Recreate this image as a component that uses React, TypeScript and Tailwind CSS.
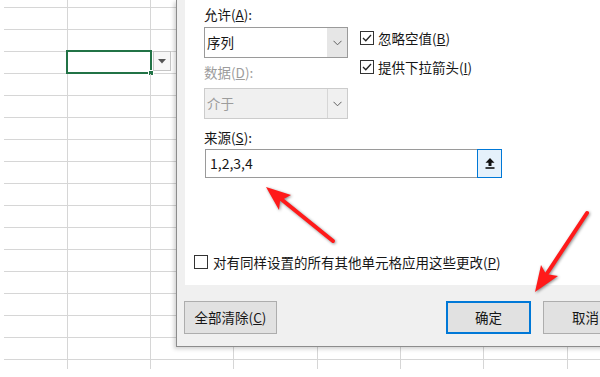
import React from "react";

const rowHeights = [8, ...Array(16).fill(22), 9];
const colWidths = [64, 83, 83, 84, 83, 83, 84, 83];

function Checkbox({ checked }: { checked?: boolean }) {
  return (
    <span className="flex h-[14px] w-[14px] shrink-0 items-center justify-center border border-[#333] bg-white">
      {checked && (
        <svg width="10" height="8" viewBox="0 0 10 8">
          <path d="M1 4 L3.8 6.8 L9 1" fill="none" stroke="#222" strokeWidth="1.3" />
        </svg>
      )}
    </span>
  );
}

function Chevron({ color }: { color: string }) {
  return (
    <svg width="9" height="6" viewBox="0 0 9 6">
      <path d="M0.5 0.8 L4.5 4.8 L8.5 0.8" fill="none" stroke={color} strokeWidth="1" />
    </svg>
  );
}

function SheetGrid() {
  return (
    <div className="flex h-[368px] flex-col pl-[4px]">
      {rowHeights.map((h, r) => (
        <div
          key={r}
          className={`flex shrink-0 ${r < rowHeights.length - 1 ? "border-b border-[#d6d6d6]" : ""}`}
          style={{ height: h }}
        >
          {colWidths.map((w, c) => (
            <div key={c} className="relative shrink-0 border-r border-[#d6d6d6]" style={{ width: w }}>
              {r === 3 && c === 1 && (
                <>
                  <div className="absolute -left-[2px] -top-[2px] h-[24px] w-[86px] border-2 border-[#217346]" />
                  <div className="absolute left-[80px] top-[18px] h-[6px] w-[6px] border border-white bg-[#217346]" />
                  <div className="absolute left-[85px] -top-[1px] flex h-[20px] w-[18px] items-center justify-center border border-[#c6c6c6] bg-[#f7f7f7]">
                    <svg width="8" height="5" viewBox="0 0 8 5">
                      <path d="M0 0 H8 L4 4.5 Z" fill="#555" />
                    </svg>
                  </div>
                </>
              )}
            </div>
          ))}
        </div>
      ))}
    </div>
  );
}

export default function App() {
  return (
    <div
      className="relative h-[377px] w-[600px] overflow-hidden bg-white text-[13.5px] text-[#161616]"
      style={{ fontFamily: '"Noto Sans CJK SC", "Noto Sans", sans-serif' }}
    >
      <SheetGrid />

      {/* data validation dialog */}
      <div className="absolute left-[176px] top-0 flex h-[347px] w-[470px] flex-col border-b border-l border-[#8c8c8c] bg-[#f0f0f0] shadow-[-2px_2px_4px_rgba(0,0,0,0.18)]">
        <div className="ml-[8px] flex h-[285px] flex-col bg-white pl-[9px] pt-[6px]">
          <div className="flex pl-[10px]">
            <div className="flex w-[144px] flex-col">
              <div className="h-[16px] leading-[16px]">
                允许(<u>A</u>):
              </div>
              <div className="mt-[5px] flex h-[31px] border border-[#9a9a9a] bg-white">
                <span className="flex-1 pl-[2px] leading-[29px]">序列</span>
                <span className="flex w-[20px] items-center justify-center bg-[#e6e6e6]">
                  <Chevron color="#606060" />
                </span>
              </div>
              <div className="mt-[6px] h-[16px] leading-[16px] text-[#9c9c9c]">
                数据(<u>D</u>):
              </div>
              <div className="mt-[8px] flex h-[31px] border border-[#cccccc] bg-[#f0f0f0]">
                <span className="flex-1 pl-[2px] leading-[29px] text-[#9c9c9c]">介于</span>
                <span className="flex w-[20px] items-center justify-center border-l border-[#d6d6d6] bg-[#f0f0f0]">
                  <Chevron color="#606060" />
                </span>
              </div>
            </div>
            <div className="ml-[12px] flex flex-col pt-[24px]">
              <div className="flex h-[16px] items-center gap-[4px]">
                <Checkbox checked />
                <span className="leading-[16px]">
                  忽略空值(<u>B</u>)
                </span>
              </div>
              <div className="mt-[13px] flex h-[16px] items-center gap-[4px]">
                <Checkbox checked />
                <span className="leading-[16px]">
                  提供下拉箭头(<u>I</u>)
                </span>
              </div>
            </div>
          </div>

          <div className="mt-[10px] h-[16px] pl-[10px] leading-[16px]">
            来源(<u>S</u>):
          </div>
          <div className="ml-[11px] mt-[4px] flex h-[29px] w-[297px]">
            <div className="flex-1 border border-r-0 border-[#9a9a9a] pl-[4px] text-[14px] leading-[27px]">1,2,3,4</div>
            <div className="flex w-[25px] items-center justify-center border border-[#0078d7] bg-[#e5f1fb]">
              <svg width="10" height="11" viewBox="0 0 10 11">
                <path d="M5 0 L9.5 4.8 H6.5 V8 H3.5 V4.8 H0.5 Z" fill="#111" />
                <rect x="0.5" y="9.2" width="9" height="1.6" fill="#111" />
              </svg>
            </div>
          </div>

          <div className="mt-[76px] flex h-[16px] items-center gap-[5px]">
            <Checkbox />
            <span className="leading-[16px]">
              对有同样设置的所有其他单元格应用这些更改(<u>P</u>)
            </span>
          </div>
        </div>

        <div className="flex pl-[7px] pt-[16px]">
          <button className="h-[33px] w-[93px] border border-[#adadad] bg-[#e1e1e1]">
            全部清除(<u>C</u>)
          </button>
          <button className="ml-[169px] h-[33px] w-[85px] border-2 border-[#0078d7] bg-[#e1e1e1]">确定</button>
          <button className="ml-[12px] h-[33px] w-[85px] border border-[#adadad] bg-[#e1e1e1]">取消</button>
        </div>
      </div>

      {/* red annotation arrows */}
      <svg
        className="pointer-events-none absolute left-0 top-0 drop-shadow-[1px_1px_1.5px_rgba(0,0,0,0.45)]"
        width="600"
        height="377"
        viewBox="0 0 600 377"
      >
        <line x1="333" y1="241" x2="281" y2="199" stroke="#ff1a1a" strokeWidth="4" strokeLinecap="round" />
        <path d="M266 187 L291 195 L280 201 L279 210 Z" fill="#ff1a1a" />
        <line x1="587" y1="213" x2="546" y2="275" stroke="#ff1a1a" strokeWidth="4" strokeLinecap="round" />
        <path d="M535 292 L541 265 L546 274 L558 276 Z" fill="#ff1a1a" />
      </svg>
    </div>
  );
}
